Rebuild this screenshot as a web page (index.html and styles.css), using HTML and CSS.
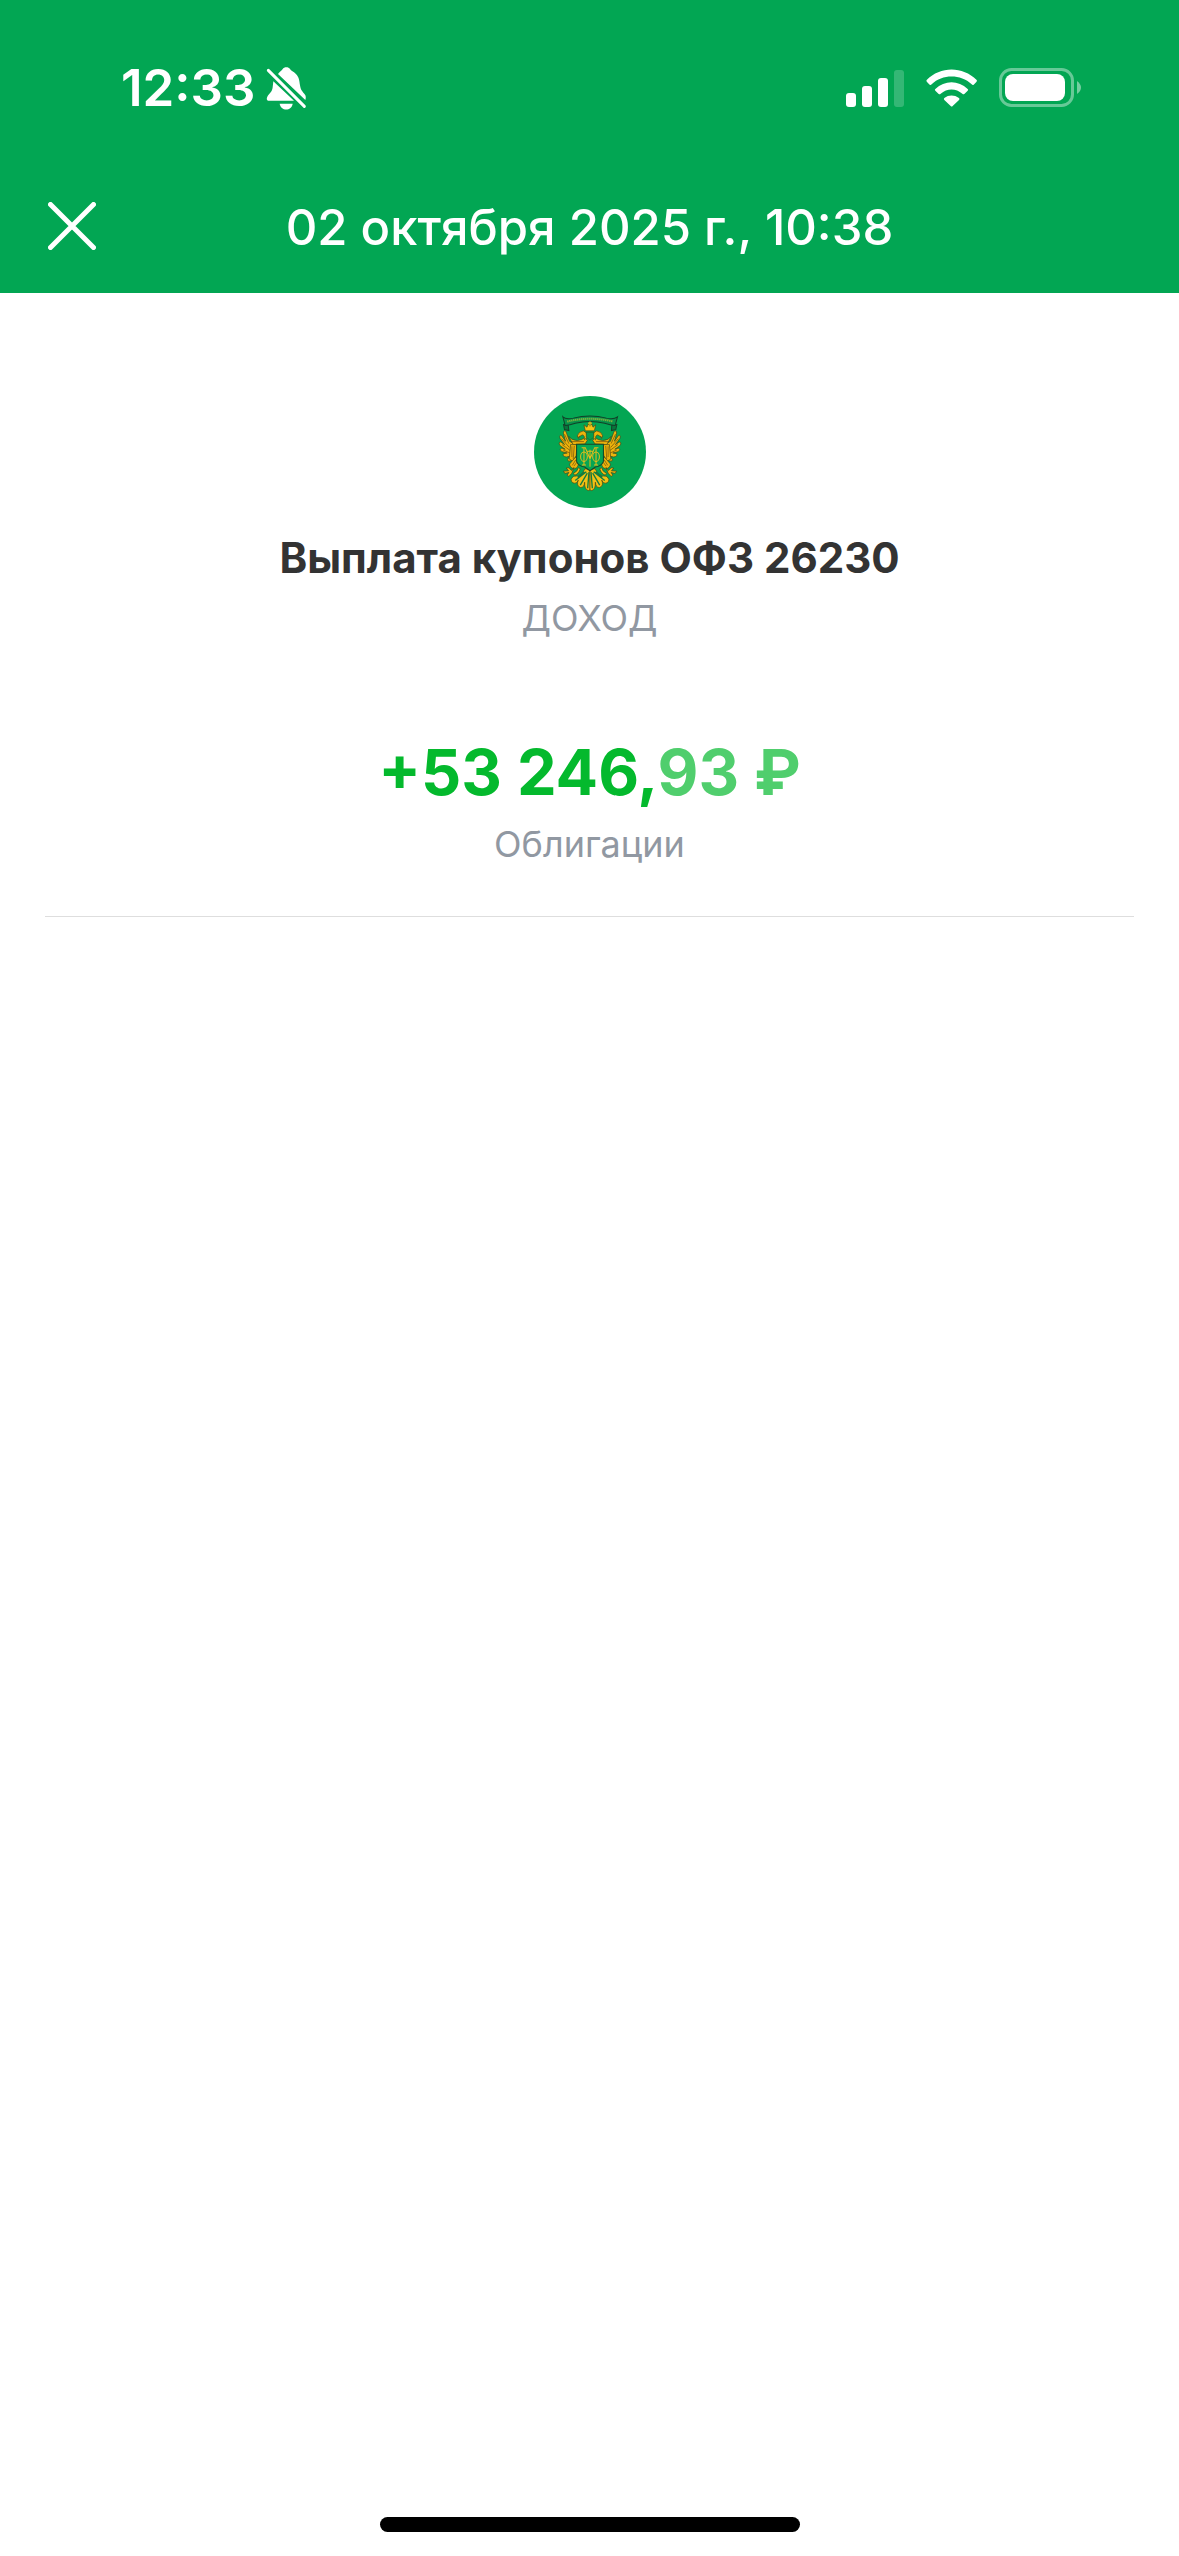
FILE: index.html
```
<!DOCTYPE html>
<html lang="ru">
<head>
    <meta charset="UTF-8">
    <meta name="viewport" content="width=device-width, initial-scale=1.0">
    <title>Выплата купонов</title>
    <link rel="stylesheet" href="styles.css">
</head>
<body>

<header class="header">
    <div class="status-bar">
        <div class="status-left">
            <span class="clock">12:33</span>
            <svg class="bell" viewBox="498 48 123 135" aria-hidden="true">
                <path fill="#fff" d="M534 72 C540 64 546 62 548 57 C552 50 566 50 570 57 C573 63 581 64 587 71 C598 82 598 92 600 106 C602 122 610 127 615 134 C618 138 618 144 616 150 Z"/>
                <path fill="#fff" d="M520 94 L582 152 L507 152 C500 152 499 146 502 140 C507 131 517 126 518 112 Z"/>
                <path fill="#fff" d="M539 161 L578 161 C575 184 542 184 539 161 Z"/>
                <path stroke="#fff" stroke-width="9" stroke-linecap="round" d="M505 61 L613 169"/>
            </svg>
        </div>
        <div class="status-right">
            <svg class="signal" viewBox="0 0 58 38" fill="#fff" aria-hidden="true">
                <rect x="0" y="24" width="10" height="14" rx="3"/>
                <rect x="16" y="17" width="10" height="21" rx="3"/>
                <rect x="32" y="9" width="10" height="29" rx="3"/>
                <rect x="48" y="1" width="10" height="37" rx="3" opacity="0.2"/>
            </svg>
            <svg class="wifi" viewBox="288 55 153 114" fill="#fff" aria-hidden="true">
                <path d="M290 88 C331 46 398 46 440 88 Q442 91 439 94 L431 102 Q428 104 425 101 C392 70 337 70 305 101 Q302 104 299 102 L291 94 Q288 91 290 88 Z"/>
                <path d="M316 115 C344 88 385 88 413 115 Q416 117 413 120 L403 130 Q400 132 397 129 C378 112 351 112 332 129 Q329 132 326 130 L316 120 Q313 117 316 115 Z"/>
                <path d="M343 142 C356 132 373 132 387 142 Q390 145 387 148 L368 166 Q365 169 362 166 L343 148 Q340 145 343 142 Z"/>
            </svg>
            <svg class="battery" viewBox="0 0 82 40" aria-hidden="true">
                <rect x="1.5" y="1.5" width="72" height="36" rx="11" fill="none" stroke="#fff" stroke-width="3" opacity="0.4"/>
                <rect x="6" y="6" width="60" height="27" rx="8" fill="#fff"/>
                <path d="M78 13 Q82 16 82 19.500 Q82 23 78 26 Z" fill="#fff" opacity="0.45"/>
            </svg>
        </div>
    </div>
    <div class="nav-bar">
        <button class="close-btn" type="button" aria-label="Закрыть">
            <svg viewBox="0 0 48 48" aria-hidden="true">
                <path d="M2.500 2.500 L45.500 45.500 M45.500 2.500 L2.500 45.500" stroke="#fff" stroke-width="5" stroke-linecap="round"/>
            </svg>
        </button>
        <h1 class="nav-title">02 октября 2025 г., 10:38</h1>
    </div>
</header>

<main class="container">
    <svg class="emblem" viewBox="28 34 334 334" fill="none" aria-hidden="true">
        <circle cx="195" cy="201" r="167" fill="#04a653"/>
        <!-- лента -->
        <path d="M116 119 L130 121 L132 137 L119 134 Z M275 119 L260 121 L259 137 L272 134 Z" fill="#08753b" stroke="#17402a" stroke-width="3"/>
        <path d="M114 96 Q123 105 145 100 Q195 87 244 100 Q266 105 277 96 L270 122 Q255 120 239 115 Q195 105 151 115 Q135 121 121 122 Z" fill="#08914a" stroke="#123f28" stroke-width="3"/>
        <path d="M127 110 Q195 94 264 110" stroke="#82b43d" stroke-width="6" stroke-dasharray="4 2"/>
        <g id="wing">
            <!-- крыло -->
            <g fill="#edb40c" stroke="#3b451c" stroke-width="2">
                <path d="M134 169 L123 139 Q115 134 116 147 L122 169 L110 152 Q102 149 106 161 L119 179 L108 171 Q99 172 106 182 L121 193 L110 189 Q102 194 111 200 L127 204 L116 206 Q111 213 124 216 L134 214 L128 224 Q130 233 142 224 L151 207 L154 180 Z"/>
                <path d="M131 154 Q139 166 157 167 Q173 165 179 158 L187 166 L180 177 L145 179 Z"/>
                <path d="M157 153 Q161 140 175 138 Q187 142 187 157 L178 165 Q180 151 172 150 L159 158 Z"/>
                <path d="M137 179 L156 179 L154 211 L145 229 L133 222 Z"/>
                <path d="M152 216 L161 231 Q161 249 148 251 Q135 249 134 237 Z"/>
                <path d="M147 247 L141 264 L132 274 L127 270 L132 262 L120 265 L116 258 L131 257 L124 249 L132 248 L140 256 Z"/>
            </g>
            <path d="M119 148 L132 176 M110 161 L133 187 M112 179 L135 196 M115 195 L135 204 M141 184 V216 M148 183 L145 222 M142 241 L153 224 M147 243 L157 230 M139 170 L177 170 M164 153 L160 162" stroke="#6c4a0d" stroke-width="2"/>
            <!-- хвост -->
            <g fill="#f2c114" stroke="#52430d" stroke-width="2">
                <path d="M180 251 Q169 275 147 273 Q132 283 144 293 Q155 297 160 285 Q153 302 167 307 Q178 307 179 291 Q178 313 190 316 L195 314 V253 Z"/>
                <path d="M166 251 Q161 267 149 270 L146 264 Q158 260 160 248 Z"/>
            </g>
            <path d="M184 260 L151 286 M187 264 L166 300 M192 261 L188 309 M178 260 L158 276" stroke="#137c3f" stroke-width="4"/>
        </g>
        <use href="#wing" transform="translate(390 0) scale(-1 1)"/>
        <path d="M181 138 L177 120 L186 127 L190 117 L195 124 L200 117 L204 127 L212 120 L208 138 Z" fill="#f4c414" stroke="#52430d" stroke-width="2"/>
        <path d="M195 110 V124 M189 115 H201" stroke="#dcb71c" stroke-width="4"/>
        <path d="M184 142 H206 V157 L195 166 L184 157 Z" fill="#069c4e" stroke="#31551e" stroke-width="2"/>
        <!-- щит с вензелем -->
        <path d="M155 178 H235 V229 Q230 243 211 246 L195 257 L179 246 Q160 243 155 229 Z" fill="#05a653" stroke="#164629" stroke-width="3"/>
        <g stroke="#eabd19" stroke-width="3">
            <path d="M177 188 V240 M213 188 V240 M170 188 H181 L195 222 L209 188 H220 M195 194 V245 M184 199 H206 M171 240 H183 M207 240 H219"/>
            <ellipse cx="177" cy="215" rx="10" ry="14"/>
            <ellipse cx="213" cy="215" rx="10" ry="14"/>
        </g>
    </svg>
    <h2 class="operation">Выплата купонов ОФЗ 26230</h2>
    <p class="kind">ДОХОД</p>
    <p class="amount">+53 246,<span class="cents">93 ₽</span></p>
    <p class="category">Облигации</p>
</main>

<div class="home-indicator"></div>

</body>
</html>
```

FILE: styles.css
```
body {
    font-family: Inter, "Noto Sans", sans-serif;
    margin: 0;
    min-height: 100vh;
    display: flex;
    flex-direction: column;
    background-color: #ffffff;
}
h1, h2, p {
    margin: 0;
}
svg {
    display: block;
}
.header {
    background: #02a653;
    color: #ffffff;
}
.status-bar {
    display: flex;
    justify-content: space-between;
    align-items: center;
    height: 176px;
    padding: 0 98px 0 121px;
}
.status-left {
    display: flex;
    align-items: center;
    gap: 10px;
}
.clock {
    font-size: 51px;
    font-weight: 600;
    line-height: 60px;
}
.bell {
    width: 41px;
    height: 45px;
}
.status-right {
    display: flex;
    align-items: center;
    gap: 22px;
}
.signal {
    width: 58px;
    height: 38px;
}
.wifi {
    width: 51px;
    height: 38px;
}
.battery {
    width: 82px;
    height: 40px;
}
.nav-bar {
    display: grid;
    grid-template-columns: 48px 1fr 48px;
    align-items: start;
    padding: 26px 48px 39px;
}
.close-btn {
    background: none;
    border: none;
    padding: 0;
    cursor: pointer;
}
.nav-title {
    font-size: 49px;
    font-weight: 500;
    line-height: 52px;
    text-align: center;
}
.container {
    margin: 0 45px;
    padding: 103px 0 48px;
    text-align: center;
    border-bottom: 1px solid #dedede;
}
.emblem {
    width: 112px;
    height: 112px;
    margin: 0 auto;
}
.operation {
    margin-top: 24px;
    font-size: 42px;
    font-weight: 700;
    line-height: 52px;
    color: #333333;
}
.kind {
    margin-top: 10px;
    font-size: 36px;
    line-height: 48px;
    color: #9198a2;
}
.amount {
    margin-top: 94px;
    font-size: 63px;
    font-weight: 700;
    line-height: 72px;
    color: #04b92d;
}
.cents {
    color: #50ce6d;
}
.category {
    margin-top: 12px;
    font-size: 36px;
    line-height: 48px;
    color: #9198a2;
}
.home-indicator {
    width: 420px;
    height: 15px;
    margin: auto auto 24px;
    border-radius: 8px;
    background: #000000;
}
```
